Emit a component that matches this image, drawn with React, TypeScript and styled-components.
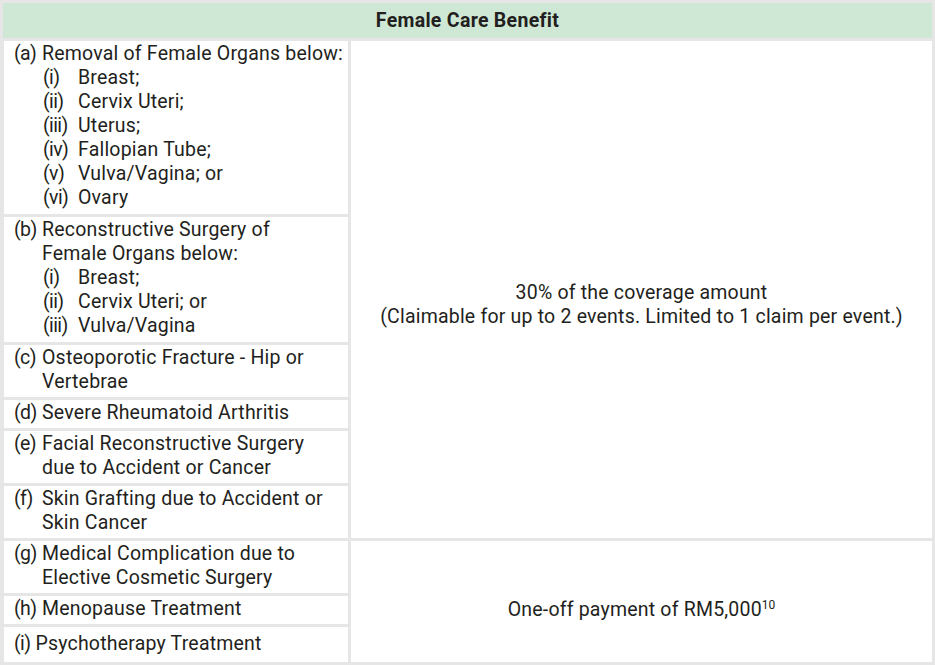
import React from "react";
import styled, { createGlobalStyle } from "styled-components";

const GlobalStyle = createGlobalStyle`
  html, body {
    margin: 0;
    padding: 0;
    background: #e6e6e6;
  }
  body {
    font-family: Roboto, "Liberation Sans", sans-serif;
    color: #231f20;
  }
`;

const Table = styled.div`
  display: grid;
  grid-template-columns: 344px 581px;
  gap: 3px;
  padding: 3px 3px 2px 4px;
  width: 935px;
  box-sizing: border-box;
  background: #e6e6e6;
`;

const HeaderCell = styled.div`
  grid-column: 1 / 3;
  background: #cfe8d6;
  height: 35px;
  margin-left: -1px;
  display: flex;
  align-items: center;
  justify-content: center;
  font-weight: 700;
  font-size: 19.5px;
  letter-spacing: 0.3px;
`;

const ItemCell = styled.div<{ $tall?: boolean }>`
  background: #fff;
  padding: 1px 0 3px 10px;
  font-size: 19.5px;
  letter-spacing: 0.2px;
  line-height: 24px;
  white-space: nowrap;
  min-height: ${(p) => (p.$tall ? "31px" : "0")};
  display: flex;
  flex-direction: column;
  justify-content: center;
`;

const ItemLine = styled.div`
  display: grid;
  grid-template-columns: 28px 1fr;
`;

const Label = styled.span`
  letter-spacing: -0.6px;
`;

const SubList = styled.div`
  display: grid;
  grid-template-columns: 35px 1fr;
  margin-left: 29px;
  padding-bottom: 1px;
`;

const ValueCell = styled.div<{ $rows: string; $shift: number }>`
  grid-column: 2;
  grid-row: ${(p) => p.$rows};
  background: #fff;
  display: flex;
  flex-direction: column;
  align-items: center;
  justify-content: center;
  text-align: center;
  padding-top: ${(p) => p.$shift}px;
  font-size: 19.5px;
  letter-spacing: 0.2px;
  line-height: 24px;
`;

const Sup = styled.sup`
  font-size: 12px;
  line-height: 0;
  vertical-align: 7px;
  letter-spacing: 0;
`;

type Item = {
  label: string;
  text: string[];
  subs?: string[];
};

const roman = ["(i)", "(ii)", "(iii)", "(iv)", "(v)", "(vi)"];

const items: Item[] = [
  {
    label: "(a)",
    text: ["Removal of Female Organs below:"],
    subs: ["Breast;", "Cervix Uteri;", "Uterus;", "Fallopian Tube;", "Vulva/Vagina; or", "Ovary"],
  },
  {
    label: "(b)",
    text: ["Reconstructive Surgery of", "Female Organs below:"],
    subs: ["Breast;", "Cervix Uteri; or", "Vulva/Vagina"],
  },
  { label: "(c)", text: ["Osteoporotic Fracture - Hip or", "Vertebrae"] },
  { label: "(d)", text: ["Severe Rheumatoid Arthritis"] },
  { label: "(e)", text: ["Facial Reconstructive Surgery", "due to Accident or Cancer"] },
  { label: "(f)", text: ["Skin Grafting due to Accident or", "Skin Cancer"] },
  { label: "(g)", text: ["Medical Complication due to", "Elective Cosmetic Surgery"] },
  { label: "(h)", text: ["Menopause Treatment"] },
];

const ItemRow: React.FC<{ item: Item }> = ({ item }) => (
  <ItemCell>
    <ItemLine>
      <Label>{item.label}</Label>
      <span>
        {item.text.map((t) => (
          <div key={t}>{t}</div>
        ))}
      </span>
    </ItemLine>
    {item.subs && (
      <SubList>
        {item.subs.map((s, i) => (
          <React.Fragment key={s}>
            <Label>{roman[i]}</Label>
            <span>{s}</span>
          </React.Fragment>
        ))}
      </SubList>
    )}
  </ItemCell>
);

const App: React.FC = () => {
  return (
    <>
      <GlobalStyle />
      <Table>
        <HeaderCell>Female Care Benefit</HeaderCell>
        {items.slice(0, 6).map((it) => (
          <ItemRow key={it.label} item={it} />
        ))}
        <ValueCell $rows="2 / 8" $shift={30}>
          <div>30% of the coverage amount</div>
          <div>(Claimable for up to 2 events. Limited to 1 claim per event.)</div>
        </ValueCell>
        {items.slice(6).map((it) => (
          <ItemRow key={it.label} item={it} />
        ))}
        <ItemCell $tall>
          <div>
            <Label>(i)</Label> Psychotherapy Treatment
          </div>
        </ItemCell>
        <ValueCell $rows="8 / 11" $shift={16}>
          <div>
            One-off payment of RM5,000<Sup>10</Sup>
          </div>
        </ValueCell>
      </Table>
    </>
  );
};

export default App;
